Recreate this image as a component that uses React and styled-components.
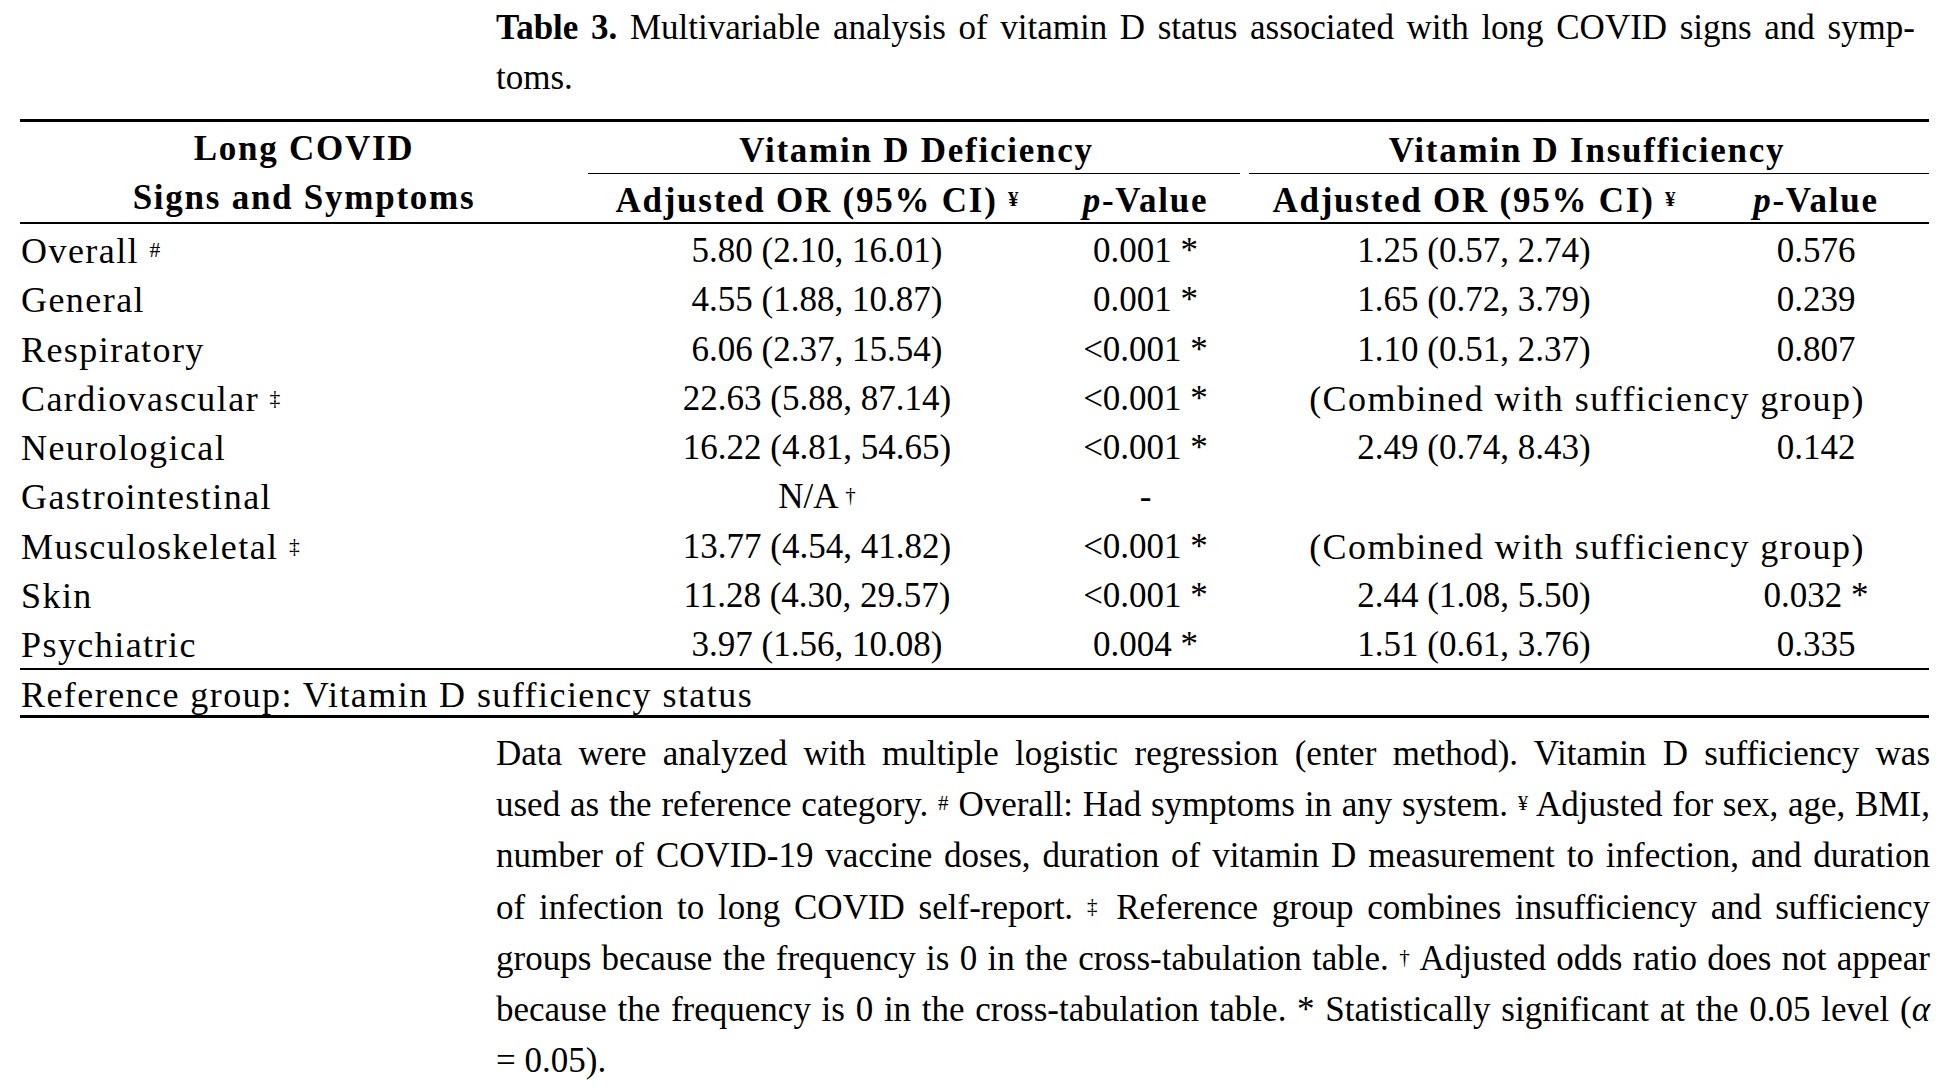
import React from "react";
import styled, { createGlobalStyle } from "styled-components";

const GlobalStyle = createGlobalStyle`
  html, body {
    margin: 0;
    padding: 0;
    background: #fff;
  }
  body {
    font-family: "Liberation Serif", "Times New Roman", serif;
    color: #000;
  }
`;

const rows = [
  { label: "Overall", mark: "#", defOr: "5.80 (2.10, 16.01)", defP: "0.001 *", insOr: "1.25 (0.57, 2.74)", insP: "0.576" },
  { label: "General", defOr: "4.55 (1.88, 10.87)", defP: "0.001 *", insOr: "1.65 (0.72, 3.79)", insP: "0.239" },
  { label: "Respiratory", defOr: "6.06 (2.37, 15.54)", defP: "<0.001 *", insOr: "1.10 (0.51, 2.37)", insP: "0.807" },
  { label: "Cardiovascular", mark: "‡", defOr: "22.63 (5.88, 87.14)", defP: "<0.001 *", combined: true },
  { label: "Neurological", defOr: "16.22 (4.81, 54.65)", defP: "<0.001 *", insOr: "2.49 (0.74, 8.43)", insP: "0.142" },
  { label: "Gastrointestinal", defOr: "N/A", defMark: "†", defP: "-", insOr: "", insP: "" },
  { label: "Musculoskeletal", mark: "‡", defOr: "13.77 (4.54, 41.82)", defP: "<0.001 *", combined: true },
  { label: "Skin", defOr: "11.28 (4.30, 29.57)", defP: "<0.001 *", insOr: "2.44 (1.08, 5.50)", insP: "0.032 *" },
  { label: "Psychiatric", defOr: "3.97 (1.56, 10.08)", defP: "0.004 *", insOr: "1.51 (0.61, 3.76)", insP: "0.335" },
];

const App = () => {
  return (
    <>
      <GlobalStyle />
      <Page>
        <Caption>
          <Line $lh={50}>
            <strong>Table 3.</strong> Multivariable analysis of vitamin D status associated with long COVID signs and symp-
          </Line>
          <Line $lh={50} $last>
            toms.
          </Line>
        </Caption>

        <Table>
          <colgroup>
            <col style={{ width: 568 }} />
            <col style={{ width: 458 }} />
            <col style={{ width: 199 }} />
            <col style={{ width: 458 }} />
            <col style={{ width: 226 }} />
          </colgroup>
          <thead>
            <tr>
              <StubHead rowSpan={2}>
                <div>Long COVID</div>
                <div>Signs and Symptoms</div>
              </StubHead>
              <GroupHead colSpan={2} $side="left">
                Vitamin D Deficiency
              </GroupHead>
              <GroupHead colSpan={2} $side="right">
                Vitamin D Insufficiency
              </GroupHead>
            </tr>
            <tr>
              <SubHead>
                Adjusted OR (95% CI) <Mark>¥</Mark>
              </SubHead>
              <SubHead>
                <em>p</em>-Value
              </SubHead>
              <SubHead>
                Adjusted OR (95% CI) <Mark>¥</Mark>
              </SubHead>
              <SubHead>
                <em>p</em>-Value
              </SubHead>
            </tr>
          </thead>
          <tbody>
            {rows.map((r, i) => {
              const rule = i === rows.length - 1 ? 2 : 0;
              return (
                <tr key={r.label}>
                  <Cell $align="left" $text $rule={rule}>
                    {r.label}
                    {r.mark && (
                      <>
                        {" "}
                        <Mark>{r.mark}</Mark>
                      </>
                    )}
                  </Cell>
                  <Cell $rule={rule}>
                    {r.defOr}
                    {r.defMark && (
                      <>
                        {" "}
                        <Mark>{r.defMark}</Mark>
                      </>
                    )}
                  </Cell>
                  <Cell $rule={rule}>{r.defP}</Cell>
                  {r.combined ? (
                    <Cell colSpan={2} $text $rule={rule}>
                      (Combined with sufficiency group)
                    </Cell>
                  ) : (
                    <>
                      <Cell $rule={rule}>{r.insOr}</Cell>
                      <Cell $rule={rule}>{r.insP}</Cell>
                    </>
                  )}
                </tr>
              );
            })}
            <tr>
              <Cell colSpan={5} $align="left" $text $rule={3} $lh={40}>
                Reference group: Vitamin D sufficiency status
              </Cell>
            </tr>
          </tbody>
        </Table>

        <Note>
          <Line $lh={51.3}>
            Data were analyzed with multiple logistic regression (enter method). Vitamin D sufficiency was
          </Line>
          <Line $lh={51.3}>
            used as the reference category. <Mark>#</Mark> Overall: Had symptoms in any system. <Mark>¥</Mark> Adjusted for sex, age, BMI,
          </Line>
          <Line $lh={51.3}>
            number of COVID-19 vaccine doses, duration of vitamin D measurement to infection, and duration
          </Line>
          <Line $lh={51.3}>
            of infection to long COVID self-report. <Mark>‡</Mark> Reference group combines insufficiency and sufficiency
          </Line>
          <Line $lh={51.3}>
            groups because the frequency is 0 in the cross-tabulation table. <Mark>†</Mark> Adjusted odds ratio does not appear
          </Line>
          <Line $lh={51.3}>
            because the frequency is 0 in the cross-tabulation table. * Statistically significant at the 0.05 level (<em>α</em>
          </Line>
          <Line $lh={51.3} $last>
            = 0.05).
          </Line>
        </Note>
      </Page>
    </>
  );
};

const Page = styled.div`
  width: 1910px;
  padding: 2.5px 0 0 20px;
  display: flex;
  flex-direction: column;
  font-size: 35px;
`;

const Caption = styled.div`
  align-self: flex-end;
  width: 1434px;
  padding-right: 15px;
  box-sizing: border-box;
`;

const Note = styled.div`
  align-self: flex-end;
  width: 1434px;
  margin-top: 10px;
`;

const Line = styled.div`
  line-height: ${(p) => p.$lh}px;
  text-align: justify;
  text-align-last: ${(p) => (p.$last ? "left" : "justify")};
`;

const Mark = styled.sup`
  font-size: 0.6em;
  vertical-align: 0.3em;
  line-height: 0;
  letter-spacing: 0;
`;

const Table = styled.table`
  width: 1909px;
  margin-top: 16.5px;
  table-layout: fixed;
  border-collapse: separate;
  border-spacing: 0;
  border-top: 3px solid #000;
  font-size: 35px;
`;

const HeadCell = styled.th`
  font-weight: 700;
  text-align: center;
  white-space: nowrap;
  letter-spacing: 0.05em;

  em {
    font-style: italic;
  }
`;

const StubHead = styled(HeadCell)`
  padding: 3px 0 0;
  vertical-align: top;
  line-height: 48.5px;
  border-bottom: 2px solid #000;
`;

const GroupHead = styled(HeadCell)`
  padding: 6px 0 0;
  line-height: 46px;
  background-image: linear-gradient(#000, #000);
  background-repeat: no-repeat;
  background-size: calc(100% - ${(p) => (p.$side === "left" ? 5 : 4)}px) 1.5px;
  background-position: ${(p) => p.$side} bottom;
`;

const SubHead = styled(HeadCell)`
  padding: 5px 0 0;
  line-height: 43px;
  border-bottom: 2px solid #000;
`;

const Cell = styled.td`
  padding: 5px 0 0 ${(p) => (p.$align === "left" ? "1px" : "0")};
  font-size: ${(p) => (p.$text ? 36 : 35)}px;
  letter-spacing: ${(p) => (p.$text ? "0.04em" : "0")};
  line-height: ${(p) => p.$lh || 44.3}px;
  text-align: ${(p) => p.$align || "center"};
  white-space: nowrap;
  vertical-align: top;
  border-bottom: ${(p) => (p.$rule ? `${p.$rule}px solid #000` : "none")};
`;

export default App;
